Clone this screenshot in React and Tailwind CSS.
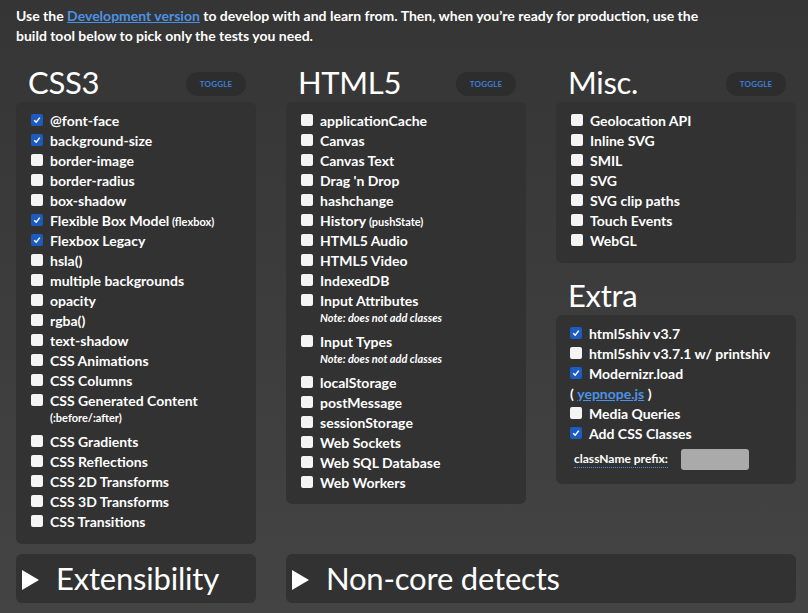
const font = { fontFamily: 'Lato, "Open Sans", sans-serif' };

const css3 = [
  ['@font-face', true],
  ['background-size', true],
  ['border-image'],
  ['border-radius'],
  ['box-shadow'],
  ['Flexible Box Model', true, '(flexbox)'],
  ['Flexbox Legacy', true],
  ['hsla()'],
  ['multiple backgrounds'],
  ['opacity'],
  ['rgba()'],
  ['text-shadow'],
  ['CSS Animations'],
  ['CSS Columns'],
  ['CSS Generated Content', false, null, '(:before/:after)', false],
  ['CSS Gradients'],
  ['CSS Reflections'],
  ['CSS 2D Transforms'],
  ['CSS 3D Transforms'],
  ['CSS Transitions'],
];

const html5 = [
  ['applicationCache'],
  ['Canvas'],
  ['Canvas Text'],
  ["Drag 'n Drop"],
  ['hashchange'],
  ['History', false, '(pushState)'],
  ['HTML5 Audio'],
  ['HTML5 Video'],
  ['IndexedDB'],
  ['Input Attributes', false, null, 'Note: does not add classes', true],
  ['Input Types', false, null, 'Note: does not add classes', true],
  ['localStorage'],
  ['postMessage'],
  ['sessionStorage'],
  ['Web Sockets'],
  ['Web SQL Database'],
  ['Web Workers'],
];

const misc = [
  ['Geolocation API'],
  ['Inline SVG'],
  ['SMIL'],
  ['SVG'],
  ['SVG clip paths'],
  ['Touch Events'],
  ['WebGL'],
];

function Box({ checked }) {
  return checked ? (
    <span className="w-3 h-3 rounded-[2px] bg-[#1c5cc0] flex items-center justify-center shrink-0">
      <svg width="8" height="8" viewBox="0 0 8 8">
        <path d="M1.2 4.2 L3.2 6.2 L6.8 1.6" stroke="white" strokeWidth="1.5" fill="none" />
      </svg>
    </span>
  ) : (
    <span className="w-3 h-3 rounded-[2px] bg-[#f4f4f4] shrink-0" />
  );
}

function Item({ label, checked, small, note, italic }) {
  return (
    <div>
      <div className="flex items-center h-5 gap-[7px]">
        <Box checked={checked} />
        <span className="text-[14px] text-white font-bold">
          {label}
          {small && <span className="text-[11px] font-bold"> {small}</span>}
        </span>
      </div>
      {note && (
        <div
          className={`pl-[19px] text-[11px] leading-4 pb-[5px] text-white font-bold ${italic ? 'italic' : ''}`}
        >
          {note}
        </div>
      )}
    </div>
  );
}

function Header({ title, toggle }) {
  return (
    <div className="h-10 flex items-center justify-between pl-3 pr-[10px]">
      <h2 className="text-[31px] text-white leading-10 tracking-[-0.3px]">{title}</h2>
      {toggle && (
        <span className="w-[60px] h-6 rounded-full bg-[#2d2d2d] text-[#3b7fd9] text-[8px] font-bold flex items-center justify-center tracking-[0.2px] mt-[4px]">
          TOGGLE
        </span>
      )}
    </div>
  );
}

function Panel({ items, className = '' }) {
  return (
    <div className={`bg-[#323232] rounded-md pl-[15px] pt-2 ${className}`}>
      {items.map(([label, checked, small, note, italic]) => (
        <Item key={label} label={label} checked={checked} small={small} note={note} italic={italic} />
      ))}
    </div>
  );
}

function Collapsed({ title, className = '' }) {
  return (
    <div className={`h-[49px] bg-[#323232] rounded-md flex items-center pl-[6px] ${className}`}>
      <svg width="18" height="20" viewBox="0 0 18 20" className="mt-[2px]">
        <polygon points="0,0 17,10 0,20" fill="white" />
      </svg>
      <span className="ml-[16px] text-[31px] text-white tracking-[-0.2px]">{title}</span>
    </div>
  );
}

export default function App() {
  return (
    <div
      className="w-[808px] h-[613px] overflow-hidden bg-gradient-to-b from-[#353535] to-[#444444] pl-4 pr-3 pt-[6px]"
      style={font}
    >
      <p className="text-[14px] leading-5 text-white font-bold w-[700px]">
        Use the <a className="text-[#4b92e6] underline">Development version</a> to develop
        with and learn from. Then, when you’re ready for production, use the build tool below
        to pick only the tests you need.
      </p>
      <div className="grid grid-cols-[240px_240px_240px] gap-x-[30px] mt-[16px]">
        <div>
          <Header title="CSS3" toggle />
          <Panel items={css3} className="pb-[13px]" />
        </div>
        <div>
          <Header title="HTML5" toggle />
          <Panel items={html5} className="pb-3" />
        </div>
        <div>
          <Header title="Misc." toggle />
          <Panel items={misc} className="pb-[13px]" />
          <div className="mt-3">
            <Header title="Extra" />
          </div>
          <div className="bg-[#323232] rounded-md pl-[14px] pt-2 pb-[14px]">
            <Item label="html5shiv v3.7" checked />
            <Item label="html5shiv v3.7.1 w/ printshiv" />
            <Item label="Modernizr.load" checked />
            <div className="h-5 flex items-center text-[14px] text-white font-bold">
              (&nbsp;<a className="text-[#4b92e6] underline">yepnope.js</a>&nbsp;)
            </div>
            <Item label="Media Queries" />
            <Item label="Add CSS Classes" checked />
            <div className="flex items-center mt-[6px] pl-1">
              <span className="text-[12px] text-white font-bold border-b border-dotted border-[#4b92e6] leading-4">
                className prefix:
              </span>
              <span className="ml-[13px] w-[68px] h-[21px] rounded-[3px] bg-[#aaaaaa]" />
            </div>
          </div>
        </div>
      </div>
      <div className="grid grid-cols-[240px_510px] gap-x-[30px] mt-[10px]">
        <Collapsed title="Extensibility" />
        <Collapsed title="Non-core detects" />
      </div>
    </div>
  );
}
